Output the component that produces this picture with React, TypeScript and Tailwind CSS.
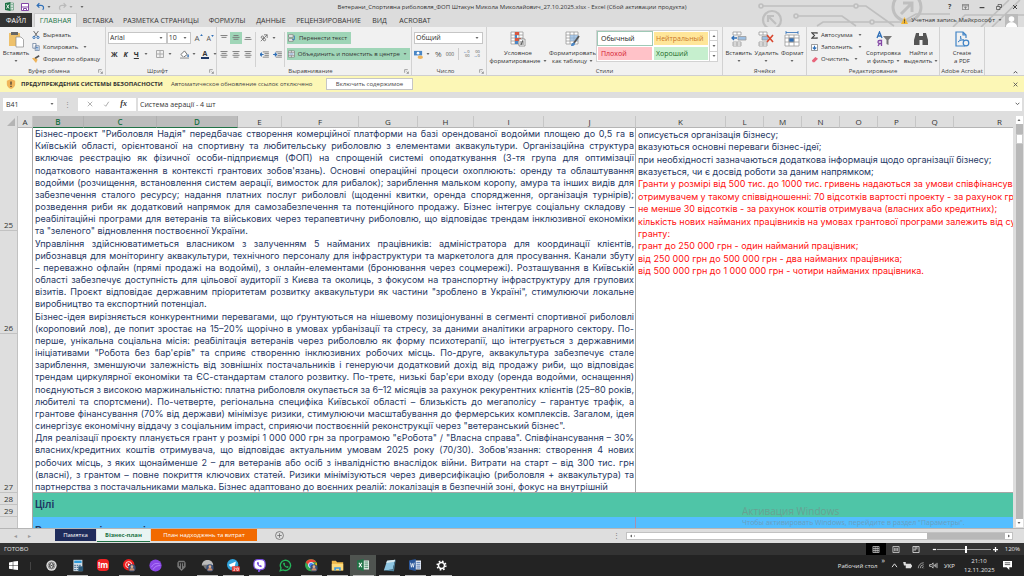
import { ReactNode } from "react";

const ui = "font-['Open_Sans','Noto_Sans',sans-serif]";

function Caret({ className = "" }: { className?: string }) {
  return (
    <svg viewBox="0 0 6 4" className={`h-[2px] w-[4px] shrink-0 ${className}`}>
      <path d="M0 0h6L3 4z" fill="#666" />
    </svg>
  );
}

function Launcher() {
  return (
    <svg viewBox="0 0 8 8" className="h-[5px] w-[5px]" fill="none" stroke="#888" strokeWidth="1.2">
      <path d="M1 6V1h5M4 4l3 3M7 4v3H4" />
    </svg>
  );
}

function Group({ label, className, launcher, children }: { label: string; className: string; launcher?: boolean; children: ReactNode }) {
  return (
    <section aria-label={label} className={`flex shrink-0 flex-col border-r border-[#d2d2d2] ${className}`}>
      <div className="flex h-10 min-w-0">{children}</div>
      <div className="flex h-2 items-center">
        <span className="flex-1 whitespace-nowrap text-center text-[6px] leading-[8px] text-[#444]">{label}</span>
        {launcher && (
          <button aria-label={`${label}: параметры`} className="pr-0.5">
            <Launcher />
          </button>
        )}
      </div>
    </section>
  );
}

function BigButton({ icon, lines, caret, className = "" }: { icon: ReactNode; lines: string[]; caret?: "below" | "inline"; className?: string }) {
  return (
    <button className={`flex flex-col items-center pt-1 ${className}`}>
      <span className="flex h-[18px] items-start">{icon}</span>
      {lines.map((l, i) => (
        <span key={l} className="flex items-center gap-0.5 whitespace-nowrap text-[6px] leading-[8px] text-[#333]">
          {l}
          {caret === "inline" && i === lines.length - 1 && <Caret />}
        </span>
      ))}
      {caret === "below" && <Caret className="mt-[3px]" />}
    </button>
  );
}

function SmallButton({ icon, label, caret }: { icon: ReactNode; label: string; caret?: boolean }) {
  return (
    <button className="flex h-3 items-center gap-[3px] whitespace-nowrap text-[6px] leading-[8px] text-[#333]">
      {icon}
      {label}
      {caret && <Caret className="ml-0.5" />}
    </button>
  );
}

function Combo({ label, value, className }: { label: string; value: string; className: string }) {
  return (
    <span className={`flex h-3 items-center border border-[#c6c6c6] bg-white ${className}`}>
      <select aria-label={label} defaultValue={value} className="min-w-0 flex-1 appearance-none bg-transparent pl-px text-[7px] leading-[10px] text-[#333] outline-none">
        <option>{value}</option>
      </select>
      <Caret className="mr-[3px]" />
    </span>
  );
}

function Lines({ widths, className = "" }: { widths: number[]; className?: string }) {
  return (
    <svg viewBox="0 0 8 8" className={`h-2 w-2 ${className}`} stroke="#777" strokeWidth="0.9">
      {widths.map((w, i) => (
        <path key={i} d={`M${4 - w / 2} ${1.5 + i * 1.9}h${w}`} />
      ))}
    </svg>
  );
}

function GridIcon({ accent, className = "h-4 w-4" }: { accent: ReactNode; className?: string }) {
  return (
    <svg viewBox="0 0 16 16" className={className} fill="none">
      <path d="M1 1h12v12H1zM1 4h12M1 7h12M1 10h12M5 1v12M9 1v12" fill="#fff" stroke="#999" strokeWidth="0.8" />
      {accent}
    </svg>
  );
}

function TitleBar() {
  return (
    <header className="relative flex h-[27px] flex-col overflow-hidden bg-[#dcdcdc]">
      <svg viewBox="0 0 270 27" className="absolute right-0 top-0 h-[27px] w-[270px]" fill="none" stroke="#bfbfbf" strokeWidth="1.6">
        <path d="M9 6h91M104 6h8l28 20M44 16h44l14 10M63 26l6-4h48M120 22h28l14-8h34M199 27l12-12h60M227 27l28-27M238 27l28-27" />
        <circle cx="7" cy="6" r="2" />
        <circle cx="102" cy="6" r="2" />
        <circle cx="42" cy="16" r="2" />
        <circle cx="118" cy="22" r="2" />
        <circle cx="18" cy="20" r="9" strokeWidth="2.2" />
        <path d="M22 24l-8-8M14 22v-6h6" strokeWidth="2.2" />
        <circle cx="153" cy="7" r="14" strokeWidth="3" />
        <path d="M147 14l11-11M149 3h9v9" strokeWidth="3" />
      </svg>
      <div className="relative flex h-[13px] items-center">
        <div className="flex w-[84px] items-center pl-[5px]">
          <svg viewBox="0 0 18 18" className="h-[9px] w-[9px]">
            <path d="M9 2h8v14H9z" fill="#fff" stroke="#217346" />
            <path d="M11 5h5M11 8h5M11 11h5M11 14h4" stroke="#217346" />
            <path d="M0 2l11-2v18L0 16z" fill="#217346" />
            <path d="M3 5l5 8M8 5l-5 8" stroke="#fff" strokeWidth="1.8" />
          </svg>
          <button aria-label="Сохранить" className="ml-[7px]">
            <svg viewBox="0 0 16 16" className="h-2 w-2">
              <path d="M1 1h14v14H1z" fill="#fff" stroke="#8346a6" strokeWidth="2" />
              <path d="M1 8h14M5 15v-4h6v4" fill="none" stroke="#8346a6" strokeWidth="2" />
            </svg>
          </button>
          <button aria-label="Отменить" className="ml-[7px] flex items-center gap-0.5">
            <svg viewBox="0 0 16 16" className="h-[9px] w-[9px]" fill="none" stroke="#2f6fb7" strokeWidth="2.2">
              <path d="M6 2L2 6l4 4M2 6h7c4 0 6 4 3 8" />
            </svg>
            <Caret />
          </button>
          <button aria-label="Повторить" className="ml-[7px] flex items-center gap-0.5 opacity-50">
            <svg viewBox="0 0 16 16" className="h-[9px] w-[9px]" fill="none" stroke="#999" strokeWidth="2.2">
              <path d="M10 2l4 4-4 4M14 6H7c-4 0-6 4-3 8" />
            </svg>
            <Caret />
          </button>
          <Caret className="ml-[7px]" />
        </div>
        <h1 className="flex-1 whitespace-nowrap pr-2 text-center text-[6px] leading-[8px] text-[#333]">
          Ветерани_Спортивна риболовля_ФОП Штакун Микола Миколайович_27.10.2025.xlsx - Excel (Сбой активации продукта)
        </h1>
        <div className="flex w-[76px] items-center justify-between pr-1.5 text-[7px] font-bold leading-none text-[#444]">
          <button aria-label="Справка">?</button>
          <button aria-label="Параметры ленты">
            <svg viewBox="0 0 12 10" className="h-[6px] w-[7px]" fill="none" stroke="#555"><path d="M.5.5h11v9H.5zM.5 3h11M6 9V5M4 6.500l2-2 2 2" /></svg>
          </button>
          <button aria-label="Свернуть">
            <svg viewBox="0 0 10 10" className="h-[6px] w-[6px]"><path d="M1 6h8" stroke="#444" strokeWidth="2" /></svg>
          </button>
          <button aria-label="Восстановить">
            <svg viewBox="0 0 12 12" className="h-[6px] w-[6px]" fill="none" stroke="#444" strokeWidth="1.4"><path d="M1 5h7v6H1zM4 5V1h7v6H8" /></svg>
          </button>
          <button aria-label="Закрыть">
            <svg viewBox="0 0 12 12" className="h-[6px] w-[6px]"><path d="M2 2l8 8M10 2l-8 8" stroke="#444" strokeWidth="2" /></svg>
          </button>
        </div>
      </div>
      <nav className="relative flex h-[14px] items-center text-[7px] leading-[9px] text-[#333]">
        <button className="h-full w-8 shrink-0 bg-[#333] text-white">ФАЙЛ</button>
        <button className="ml-0.5 h-full w-[43px] shrink-0 border-x border-t border-[#ccc] bg-[#f1f1f1] text-[#217346]">ГЛАВНАЯ</button>
        <button className="w-[42px] shrink-0">ВСТАВКА</button>
        <button className="w-[84px] shrink-0 whitespace-nowrap">РАЗМЕТКА СТРАНИЦЫ</button>
        <button className="w-12 shrink-0">ФОРМУЛЫ</button>
        <button className="w-10 shrink-0">ДАННЫЕ</button>
        <button className="w-[75px] shrink-0 whitespace-nowrap">РЕЦЕНЗИРОВАНИЕ</button>
        <button className="w-[27px] shrink-0">ВИД</button>
        <button className="w-11 shrink-0">ACROBAT</button>
        <div className="ml-auto flex items-center gap-[3px] pr-1.5">
          <svg viewBox="0 0 12 12" className="h-[7px] w-[7px]"><path d="M6 0l6 12H0z" fill="#f2b632" /><path d="M6 4v4M6 9v1.500" stroke="#333" strokeWidth="1.4" /></svg>
          <span className="whitespace-nowrap text-[6px]">Учетная запись Майкрософт</span>
          <Caret />
          <svg viewBox="0 0 14 14" className="h-[13px] w-[13px]"><path d="M0 0h14v14H0z" fill="#bbb" /><circle cx="7" cy="5.500" r="3" fill="#fff" /><path d="M1 14c0-7 12-7 12 0z" fill="#fff" /></svg>
        </div>
      </nav>
    </header>
  );
}

function Ribbon() {
  return (
    <div className="flex h-[49px] overflow-hidden border-b border-[#cfcfcf] bg-[#f1f1f1]">
      <Group label="Буфер обмена" className="w-[106px]" launcher>
        <BigButton
          className="w-8"
          caret="below"
          lines={["Вставить"]}
          icon={
            <svg viewBox="0 0 16 17" className="h-[17px] w-4">
              <path d="M1 2h11v13H1z" fill="#eec16c" />
              <path d="M3 1h7v3H3z" fill="#666" />
              <path d="M8 6h5l2.500 2.500V16H8z" fill="#fff" stroke="#888" strokeWidth=".7" />
            </svg>
          }
        />
        <div className="flex flex-col pt-0.5">
          <SmallButton label="Вырезать" icon={<svg viewBox="0 0 10 10" className="h-2 w-2" fill="none" strokeWidth="1.2"><path d="M2 0l5 7M8 0L3 7" stroke="#666" /><circle cx="2.500" cy="8" r="1.400" stroke="#2f6fb7" /><circle cx="7.500" cy="8" r="1.400" stroke="#2f6fb7" /></svg>} />
          <SmallButton caret label="Копировать" icon={<svg viewBox="0 0 10 10" className="h-2 w-2" fill="#fff" stroke="#6a7f9c"><path d="M1 .5h4v6H1zM4 3.500h5v6H4z" /><path d="M5 5.500h3M5 7.500h3" stroke="#2f6fb7" /></svg>} />
          <SmallButton label="Формат по образцу" icon={<svg viewBox="0 0 10 10" className="h-2 w-2"><path d="M0 4l4-1 3 3-2 4z" fill="#eeb45c" /><path d="M4 4l5-3" stroke="#555" strokeWidth="2" /></svg>} />
        </div>
      </Group>

      <Group label="Шрифт" className="w-[111px]" launcher>
        <div className="flex w-full flex-col gap-1 px-0.5 pt-[5px]">
          <div className="flex items-center">
            <Combo label="Шрифт" value="Arial" className="w-[59px]" />
            <Combo label="Размер шрифта" value="10" className="w-6" />
            <button aria-label="Увеличить размер" className="ml-1 flex items-start text-[8px] leading-none text-[#555]">
              A<svg viewBox="0 0 4 3" className="h-[2px] w-[3px]"><path d="M0 3h4L2 0z" fill="#2f6fb7" /></svg>
            </button>
            <button aria-label="Уменьшить размер" className="ml-1 flex items-start text-[7px] leading-none text-[#555]">
              A<svg viewBox="0 0 4 3" className="h-[2px] w-[3px]"><path d="M0 0h4L2 3z" fill="#2f6fb7" /></svg>
            </button>
          </div>
          <div className="flex h-3 items-center text-[7px] leading-none text-[#333]">
            <button className="ml-[3px] font-bold">Ж</button>
            <button className="ml-1.5 font-bold italic">К</button>
            <button className="ml-1.5 flex items-center gap-[5px] font-bold underline">Ч<Caret /></button>
            <span className="ml-1 h-3 w-px bg-[#ccc]" />
            <button aria-label="Границы" className="ml-1 flex items-center gap-1">
              <svg viewBox="0 0 8 8" className="h-2 w-2" fill="none" stroke="#aaa"><path d="M.5.5h7v7h-7zM4 0v8M0 4h8" /></svg>
              <Caret />
            </button>
            <span className="ml-1 h-3 w-px bg-[#ccc]" />
            <button aria-label="Цвет заливки" className="ml-1 flex items-center gap-[3px]">
              <svg viewBox="0 0 10 10" className="h-[9px] w-[9px]"><path d="M1 5l4-4 3 4-4 3z" fill="#fff" stroke="#666" /><path d="M9 5v3" stroke="#2f6fb7" strokeWidth="1.500" /><path d="M0 9h10" stroke="#bbb" strokeWidth="2" /></svg>
              <Caret />
            </button>
            <button aria-label="Цвет текста" className="ml-[5px] flex items-center gap-1">
              <span className="w-2 border-b-2 border-[#1f3864] text-center text-[7px] font-bold leading-[7px]">А</span>
              <Caret />
            </button>
          </div>
        </div>
      </Group>

      <Group label="Выравнивание" className="w-[195px]" launcher>
        <div className="flex w-full pt-[5px]">
          <div className="flex w-[38px] flex-col gap-1 pl-px">
            <div className="flex h-3 items-center">
              <button aria-label="По верхнему краю" className="flex h-3 w-3 items-center justify-center"><Lines widths={[7, 5]} /></button>
              <button aria-label="По середине" className="flex h-3 w-3 items-center justify-center bg-[#9fd5b7]"><Lines widths={[5, 7, 5]} /></button>
              <button aria-label="По нижнему краю" className="flex h-3 w-3 items-end justify-center"><Lines widths={[5, 7]} /></button>
            </div>
            <div className="flex h-3 items-center">
              <button aria-label="По левому краю" className="flex w-3 justify-center"><Lines widths={[7, 5, 7, 5]} /></button>
              <button aria-label="По центру" className="flex w-3 justify-center"><Lines widths={[7, 5, 7, 5]} /></button>
              <button aria-label="По правому краю" className="flex w-3 justify-center"><Lines widths={[7, 5, 7, 5]} /></button>
            </div>
          </div>
          <div className="flex w-[30px] flex-col gap-1 border-x border-[#d2d2d2] pl-1">
            <button aria-label="Ориентация" className="flex h-3 items-center gap-1">
              <svg viewBox="0 0 10 10" className="h-2 w-2" fill="none" stroke="#666"><path d="M1 9l8-8M5 1h4v4" /><circle cx="3" cy="4" r="1.500" /><circle cx="5.500" cy="7" r="1.500" /></svg>
              <Caret />
            </button>
            <div className="flex h-3 items-center gap-1">
              <button aria-label="Уменьшить отступ"><svg viewBox="0 0 10 8" className="h-[7px] w-[9px]" stroke="#777"><path d="M3 1h7M5 3h5M5 5h5M3 7h7" /><path d="M0 4h4M2 2L0 4l2 2" stroke="#2f6fb7" fill="none" strokeWidth="1.300" /></svg></button>
              <button aria-label="Увеличить отступ"><svg viewBox="0 0 10 8" className="h-[7px] w-[9px]" stroke="#777"><path d="M3 1h7M5 3h5M5 5h5M3 7h7" /><path d="M0 4h4M2 2l2 2-2 2" stroke="#2f6fb7" fill="none" strokeWidth="1.300" /></svg></button>
            </div>
          </div>
          <div className="flex flex-col items-start gap-1 pl-0.5">
            <button className="flex h-3 w-16 items-center gap-[3px] whitespace-nowrap bg-[#9fd5b7] px-px text-[6px] leading-[8px] text-[#333]">
              <svg viewBox="0 0 10 10" className="h-2 w-2" stroke="#777" fill="#fff"><path d="M.5 1h6v3h-6zM.5 6h6v3h-6z" /><path d="M8 2v5H5" stroke="#2f6fb7" fill="none" /></svg>
              Перенести текст
            </button>
            <button className="flex h-3 w-[123px] items-center gap-[3px] whitespace-nowrap bg-[#9fd5b7] px-px text-[6px] leading-[8px] text-[#333]">
              <svg viewBox="0 0 10 10" className="h-2 w-2" stroke="#777" fill="#fff"><path d="M.5.5h9v9h-9zM.5 3h9M.5 7h9M5 0v3M5 7v3" /><path d="M2 5h6" stroke="#2f6fb7" /></svg>
              Объединить и поместить в центре
              <Caret className="ml-auto mr-0.5" />
            </button>
          </div>
        </div>
      </Group>

      <Group label="Число" className="w-[75px]" launcher>
        <div className="flex w-full flex-col gap-1 px-0.5 pt-[5px]">
          <Combo label="Числовой формат" value="Общий" className="w-[69px]" />
          <div className="flex h-3 items-center text-[7px] leading-none text-[#555]">
            <button aria-label="Финансовый формат" className="flex items-center gap-[3px]">
              <svg viewBox="0 0 10 10" className="h-[9px] w-[9px]"><path d="M0 1h9v5H0z" fill="#4a86c5" /><circle cx="4.500" cy="3.500" r="1.500" fill="#fff" /><ellipse cx="7" cy="8" rx="3" ry="2" fill="#eeb45c" /></svg>
              <Caret />
            </button>
            <button className="ml-[5px] text-[8px]">%</button>
            <button className="ml-1 text-[5px]">000</button>
            <span className="ml-1 h-3 w-px bg-[#ccc]" />
            <button aria-label="Увеличить разрядность" className="ml-1 flex flex-col items-end text-[4px] leading-[4px]"><span><b className="text-[#2f6fb7]">←</b>0</span><span>00</span></button>
            <button aria-label="Уменьшить разрядность" className="ml-1 flex flex-col items-end text-[4px] leading-[4px]"><span>00</span><span><b className="text-[#2f6fb7]">→</b>0</span></button>
          </div>
        </div>
      </Group>

      <Group label="Стили" className="w-[236px]">
        <BigButton className="w-[62px]" caret="inline" lines={["Условное", "форматирование"]} icon={<GridIcon accent={<><path d="M5 1h4v3H5zM5 7h6v3H5z" fill="#d9573f" /><path d="M5 4h2v3H5zM5 10h3v3H5z" fill="#4a86c5" /><path d="M9 8h6v7H9z" fill="#fff" stroke="#777" strokeWidth=".7" /><path d="M10 11h4M10 13h4M13 9l-2 5" stroke="#333" strokeWidth=".7" /></>} />} />
        <BigButton className="w-[47px]" caret="inline" lines={["Форматировать", "как таблицу"]} icon={<GridIcon accent={<><path d="M5 4h8v6H5z" fill="#8ab4de" opacity=".7" /><path d="M14 5l-5 7" stroke="#555" strokeWidth="1.800" /><path d="M6 15c0-3 2-4 4-3 0 3-2 3-4 3z" fill="#4a86c5" /></>} />} />
        <div className="mt-[3px] flex h-8 w-[122px] border border-[#d2d2d2] bg-white">
          <div className="grid flex-1 grid-cols-2 gap-0.5 p-px text-[7px] leading-[9px]">
            <button className="bg-white px-[3px] text-left text-[#222] outline outline-[#9fc9b6]">Обычный</button>
            <button className="bg-[#ffe699] px-0.5 text-left text-[#c9762b]">Нейтральный</button>
            <button className="bg-[#ffc2c8] px-[3px] text-left text-[#d4202f]">Плохой</button>
            <button className="bg-[#c6efce] px-0.5 text-left text-[#1d6b28]">Хороший</button>
          </div>
          <div className="flex w-2 flex-col divide-y divide-[#d2d2d2] border-l border-[#d2d2d2]">
            <button aria-label="Предыдущие стили" className="flex flex-1 items-center justify-center"><Caret className="rotate-180" /></button>
            <button aria-label="Следующие стили" className="flex flex-1 items-center justify-center"><Caret /></button>
            <button aria-label="Все стили" className="flex flex-1 items-center justify-center"><Caret /></button>
          </div>
        </div>
      </Group>

      <Group label="Ячейки" className="w-[84px]">
        <BigButton className="w-8" caret="below" lines={["Вставить"]} icon={<svg viewBox="0 0 16 16" className="h-4 w-4" fill="#fff" stroke="#999" strokeWidth=".8"><path d="M2 1h8v3H2zM6 1v3M2 11h8v4H2zM6 11v4M2 13h8" /><path d="M7 5.500h8v3.500H7z" fill="#9dbfe2" /><path d="M6 7H1M3 5L1 7l2 2" stroke="#2f6fb7" strokeWidth="1.300" fill="none" /></svg>} />
        <BigButton className="w-6" caret="below" lines={["Удалить"]} icon={<svg viewBox="0 0 16 16" className="h-4 w-4" fill="#fff" stroke="#999" strokeWidth=".8"><path d="M1 1h8v3H1zM5 1v3M1 11h8v4H1zM5 11v4M1 13h8" /><path d="M4 5.500h6v3.500H4z" fill="#9dbfe2" /><path d="M9 4l6 7M15 4l-6 7" stroke="#d9472f" strokeWidth="1.600" /></svg>} />
        <BigButton className="w-7" caret="below" lines={["Формат"]} icon={<svg viewBox="0 0 16 16" className="h-4 w-4" fill="#fff" stroke="#999" strokeWidth=".8"><path d="M1 4h14v11H1zM1 7h14M1 11h14M5 4v11M10 4v11" /><path d="M5 7h5v4H5z" fill="#2f6fb7" /><path d="M2 1.500h12M2 0v3M14 0v3" stroke="#2f6fb7" /></svg>} />
      </Group>

      <Group label="Редактирование" className="w-[133px]">
        <div className="flex w-[56px] flex-col pl-1 pt-0.5">
          <SmallButton caret label="Автосумма" icon={<svg viewBox="0 0 8 8" className="h-[7px] w-[7px]" fill="none" stroke="#444" strokeWidth="1.300"><path d="M7 2V1H1l3 3-3 3h6V6" /></svg>} />
          <SmallButton caret label="Заполнить" icon={<svg viewBox="0 0 8 8" className="h-[7px] w-[7px]" fill="#fff" stroke="#888"><path d="M.5.5h7v7h-7z" /><path d="M4 2v4M2 4l2 2 2-2" stroke="#2f6fb7" strokeWidth="1.300" fill="none" /></svg>} />
          <SmallButton caret label="Очистить" icon={<svg viewBox="0 0 8 8" className="h-[7px] w-[7px]"><path d="M1 5l4-4 3 2-4 4H2z" fill="#e8657b" /></svg>} />
        </div>
        <BigButton className="w-[41px]" caret="inline" lines={["Сортировка", "и фильтр"]} icon={<svg viewBox="0 0 18 16" className="h-4 w-[18px]"><path d="M2 7l2.500-6L7 7M3 5h3" fill="none" stroke="#2f6fb7" strokeWidth="1.300" /><path d="M6.500 15V9.500H4.500a1.500 1.500 0 000 3h2M4.500 12.500L3 15" fill="none" stroke="#8346a6" strokeWidth="1.300" /><path d="M8 5h9l-3.500 4v5l-2-1V9z" fill="#777" /></svg>} />
        <BigButton className="w-[34px]" caret="inline" lines={["Найти и", "выделить"]} icon={<svg viewBox="0 0 16 16" className="h-4 w-4" fill="#555"><path d="M3 2h3v3h4V2h3l2 7v5H9.500V9h-3v5H1V9z" /></svg>} />
      </Group>

      <Group label="Adobe Acrobat" className="w-[45px]">
        <BigButton className="w-full" lines={["Create", "a PDF"]} icon={<svg viewBox="0 0 16 16" className="h-4 w-4" fill="none" stroke="#3f83c6" strokeWidth="1.200"><path d="M11 15H2V1h7l3 3v3M9 1v3h3" /><path d="M4 11c3-2 3-5 2.500-6C6 8 8 9 10 9c-2 0-4 0-6 2z" strokeWidth=".9" /><circle cx="12" cy="12" r="2.800" /></svg>} />
      </Group>
      <button aria-label="Свернуть ленту" className="mb-px ml-auto mr-1.5 self-end">
        <svg viewBox="0 0 8 6" className="h-1 w-[5px]" fill="none" stroke="#555" strokeWidth="1.600"><path d="M1 5l3-3 3 3" /></svg>
      </button>
    </div>
  );
}

function SecurityBar() {
  return (
    <div role="alert" className="flex h-4 items-center bg-[#fcf7b6] text-[6px] leading-[8px] text-[#444]">
      <svg viewBox="0 0 12 12" className="ml-1.5 h-[10px] w-[10px]"><path d="M6 0l5 2v4c0 3-2 5-5 6-3-1-5-3-5-6V2z" fill="#f0b65a" /><path d="M6 3v4M6 8v1.500" stroke="#333" strokeWidth="1.400" /></svg>
      <strong className="ml-[5px] w-[145px] whitespace-nowrap text-[#333]">ПРЕДУПРЕЖДЕНИЕ СИСТЕМЫ БЕЗОПАСНОСТИ</strong>
      <span className="ml-[5px] w-[144px] whitespace-nowrap">Автоматическое обновление ссылок отключено</span>
      <button className="ml-[11px] h-3 w-[87px] whitespace-nowrap border border-[#c6c6c6] bg-white">Включить содержимое</button>
      <button aria-label="Закрыть сообщение" className="ml-auto mr-1.5">
        <svg viewBox="0 0 8 8" className="h-[5px] w-[5px]" stroke="#555" strokeWidth="1.400"><path d="M1 1l6 6M7 1L1 7" /></svg>
      </button>
    </div>
  );
}

function FormulaBar() {
  return (
    <div className="flex h-6 items-center bg-[#dedede] pl-[3px] pr-0.5 text-[#333]">
      <div className="flex h-[13px] w-[54px] items-center bg-white">
        <input aria-label="Имя" defaultValue="B41" className="w-9 flex-1 pl-[3px] text-[7px] leading-[9px] outline-none" />
        <Caret className="mr-[3px]" />
      </div>
      <span className="mx-[7px] text-[7px] leading-none text-[#888]">⋮</span>
      <div className="flex h-[13px] w-[58px] items-center justify-around bg-white px-1">
        <button aria-label="Отмена"><svg viewBox="0 0 8 8" className="h-[6px] w-[6px]" stroke="#aaa" strokeWidth="1.200"><path d="M1 1l6 6M7 1L1 7" /></svg></button>
        <button aria-label="Ввод"><svg viewBox="0 0 8 8" className="h-[6px] w-[7px]" fill="none" stroke="#aaa" strokeWidth="1.300"><path d="M1 5l2 2 4-6" /></svg></button>
        <button aria-label="Вставить функцию" className="font-['Liberation_Serif',serif] text-[8px] font-bold italic leading-none">fx</button>
      </div>
      <div className="ml-0.5 flex h-[13px] flex-1 items-center bg-white">
        <input aria-label="Строка формул" defaultValue="Система аерації - 4 шт" className="flex-1 pl-0.5 text-[7px] leading-[9px] outline-none" />
        <svg viewBox="0 0 8 6" className="mr-0.5 h-1 w-[5px]" fill="none" stroke="#666" strokeWidth="1.600"><path d="M1 1l3 3 3-3" /></svg>
      </div>
    </div>
  );
}

const planLines: [string, boolean?][] = [
  ["Бізнес-проєкт \"Риболовля Надія\" передбачає створення комерційної платформи на базі орендованої водойми площею до 0,5 га в"],
  ["Київській області, орієнтованої на спортивну та любительську риболовлю з елементами аквакультури. Організаційна структура"],
  ["включає реєстрацію як фізичної особи-підприємця (ФОП) на спрощеній системі оподаткування (3-тя група для оптимізації"],
  ["податкового навантаження в контексті грантових зобов'язань). Основні операційні процеси охоплюють: оренду та облаштування"],
  ["водойми (розчищення, встановлення систем аерації, вимосток для рибалок); зариблення мальком коропу, амура та інших видів для"],
  ["забезпечення сталого ресурсу; надання платних послуг риболовлі (щоденні квитки, оренда спорядження, організація турнірів);"],
  ["розведення риби як додатковий напрямок для самозабезпечення та потенційного продажу. Бізнес інтегрує соціальну складову –"],
  ["реабілітаційні програми для ветеранів та військових через терапевтичну риболовлю, що відповідає трендам інклюзивної економіки"],
  ["та \"зеленого\" відновлення поствоєнної України.", true],
  ["Управління здійснюватиметься власником з залученням 5 найманих працівників: адміністратора для координації клієнтів,"],
  ["рибознавця для моніторингу аквакультури, технічного персоналу для інфраструктури та маркетолога для просування. Канали збуту"],
  ["– переважно офлайн (прямі продажі на водоймі), з онлайн-елементами (бронювання через соцмережі). Розташування в Київській"],
  ["області забезпечує доступність для цільової аудиторії з Києва та околиць, з фокусом на транспортну інфраструктуру для групових"],
  ["візитів. Проєкт відповідає державним пріоритетам розвитку аквакультури як частини \"зроблено в Україні\", стимулюючи локальне"],
  ["виробництво та експортний потенціал.", true],
  ["Бізнес-ідея вирізняється конкурентними перевагами, що ґрунтуються на нішевому позиціонуванні в сегменті спортивної риболовлі"],
  ["(короповий лов), де попит зростає на 15–20% щорічно в умовах урбанізації та стресу, за даними аналітики аграрного сектору. По-"],
  ["перше, унікальна соціальна місія: реабілітація ветеранів через риболовлю як форму психотерапії, що інтегрується з державними"],
  ["ініціативами \"Робота без бар'єрів\" та сприяє створенню інклюзивних робочих місць. По-друге, аквакультура забезпечує стале"],
  ["зариблення, зменшуючи залежність від зовнішніх постачальників і генеруючи додатковий дохід від продажу риби, що відповідає"],
  ["трендам циркулярної економіки та ЄС-стандартам сталого розвитку. По-третє, низькі бар'єри входу (оренда водойми, оснащення)"],
  ["поєднуються з високою маржинальністю: платна риболовля окупається за 6–12 місяців за рахунок рекурентних клієнтів (25–80 років,"],
  ["любителі та спортсмени). По-четверте, регіональна специфіка Київської області – близькість до мегаполісу – гарантує трафік, а"],
  ["грантове фінансування (70% від держави) мінімізує ризики, стимулюючи масштабування до фермерських комплексів. Загалом, ідея"],
  ["синергізує економічну віддачу з соціальним impact, сприяючи поствоєнній реконструкції через \"ветеранський бізнес\".", true],
  ["Для реалізації проєкту планується грант у розмірі 1 000 000 грн за програмою \"єРобота\" / \"Власна справа\". Співфінансування – 30%"],
  ["власних/кредитних коштів отримувача, що відповідає актуальним умовам 2025 року (70/30). Зобов'язання: створення 4 нових"],
  ["робочих місць, з яких щонайменше 2 – для ветеранів або осіб з інвалідністю внаслідок війни. Витрати на старт – від 300 тис. грн"],
  ["(власні), з грантом – повне покриття ключових статей. Ризики мінімізуються через диверсифікацію (риболовля + аквакультура) та"],
  ["партнерства з постачальниками малька. Бізнес адаптовано до воєнних реалій: локалізація в безпечній зоні, фокус на внутрішній", true],
];

const noteLines: [string, boolean?][] = [
  ["описується організація бізнесу;"],
  ["вказуються основні переваги бізнес-ідеї;"],
  ["при необхідності зазначаються додаткова інформація щодо організації бізнесу;"],
  ["вказується, чи є досвід роботи за даним напрямком;"],
  ["Гранти у розмірі від 500 тис. до 1000 тис. гривень надаються за умови співфінансування", true],
  ["отримувачем у такому співвідношенні: 70 відсотків вартості проекту - за рахунок гранту,", true],
  ["не менше 30 відсотків - за рахунок коштів отримувача (власних або кредитних);", true],
  ["кількість нових найманих працівників на умовах грантової програми залежить від суми", true],
  ["гранту:", true],
  ["грант до 250 000 грн - один найманий працівник;", true],
  ["від 250 000 грн до 500 000 грн - два найманих працівника;", true],
  ["від 500 000 грн до 1 000 000 грн - чотири найманих працівника.", true],
];

const columns: [string, string][] = [
  ["A", "w-[15px]"], ["B", "w-[51px]"], ["C", "w-[73px]"], ["D", "w-[81px]"], ["E", "w-[44px]"],
  ["F", "w-[77px]"], ["G", "w-[59px]"], ["H", "w-[56px]"], ["I", "w-[70px]"], ["J", "w-[92px]"],
  ["K", "w-[90px]"], ["L", "w-[38px]"], ["M", "w-[38px]"], ["N", "w-[38px]"], ["O", "w-[38px]"],
  ["P", "w-[38px]"], ["Q", "w-[38px]"], ["R", "w-auto"],
];

const rowHead = "border-b border-r border-[#c2c2c2] bg-[#dedede] p-0 align-bottom text-[8px] font-normal leading-[10px] text-[#333]";

function Sheet() {
  return (
    <div className="relative flex min-h-0 flex-1 bg-[#dedede]">
      <div className="h-[412px] min-w-0 flex-1 overflow-hidden">
        <table className="w-full table-fixed border-separate border-spacing-0">
          <colgroup>
            <col className="w-[18px]" />
            {columns.map(([n, w]) => <col key={n} className={w} />)}
          </colgroup>
          <thead>
            <tr className="h-3 text-[8px] leading-[11px]">
              <td className="border-r border-[#c2c2c2] p-0">
                <svg viewBox="0 0 10 10" className="ml-auto mr-0.5 h-2 w-2"><path d="M10 0v10H0z" fill="#b4b4b4" /></svg>
              </td>
              {columns.map(([n]) => (
                <th
                  key={n}
                  scope="col"
                  className={
                    "BCD".includes(n)
                      ? "border-b border-r border-b-[#217346] border-r-[#b0b0b0] bg-[#bcbcbc] p-0 font-semibold text-[#217346]"
                      : n === "R"
                        ? "border-b border-[#b5b5b5] p-0 pl-8 font-normal text-[#333]"
                        : "border-b border-r border-b-[#b5b5b5] border-r-[#c6c6c6] p-0 font-normal text-[#333]"
                  }
                >
                  {n}
                </th>
              ))}
            </tr>
          </thead>
          <tbody className="font-['Inter','Liberation_Sans',Arial,sans-serif] text-[#1f3864]">
            <tr className="h-[103px]">
              <th scope="row" className={`${ui} ${rowHead}`}>25</th>
              <td rowSpan={6} className="border-r border-[#a6a6a6] bg-white" />
              <td rowSpan={3} colSpan={9} className="border-b border-r border-[#a6a6a6] bg-white p-0">
                <div className="flex h-[364px] flex-col justify-between overflow-hidden pl-0.5 pr-px pt-px text-[9px] leading-[10px]">
                  {planLines.map(([text, ragged]) => (
                    <p key={text} className={ragged ? "whitespace-nowrap" : "whitespace-nowrap [text-align-last:justify]"}>{text}</p>
                  ))}
                </div>
              </td>
              <td rowSpan={3} colSpan={8} className="overflow-hidden border-b border-[#a6a6a6] bg-white p-0 align-top">
                <div className="flex h-[148px] flex-col justify-between pl-0.5 pt-0.5 text-[9px] leading-[10px]">
                  {noteLines.map(([text, red]) => (
                    <p key={text} className={red ? "whitespace-nowrap text-[#ff1010]" : "whitespace-nowrap"}>{text}</p>
                  ))}
                </div>
              </td>
            </tr>
            <tr className="h-[103px]"><th scope="row" className={`${ui} ${rowHead}`}>26</th></tr>
            <tr className="h-[159px]"><th scope="row" className={`${ui} ${rowHead}`}>27</th></tr>
            <tr className="h-3">
              <th scope="row" className={`${ui} ${rowHead}`}>28</th>
              <td rowSpan={2} colSpan={17} className="bg-[#4fc5a7] p-0 pl-0.5 align-middle font-['Liberation_Sans',Arial,sans-serif] text-[10px] font-bold leading-3">Цілі</td>
            </tr>
            <tr className="h-3"><th scope="row" className={`${ui} ${rowHead}`}>29</th></tr>
            <tr className="h-4">
              <th scope="row" aria-label="30" className={`${ui} ${rowHead}`} />
              <td colSpan={9} className="border-r border-[#a98fae] bg-[#54beff] p-0 pl-0.5 pt-2 align-top font-['Liberation_Sans',Arial,sans-serif] text-[10px] font-bold leading-[12px]">
                <div className="whitespace-nowrap">Результати діяльності</div>
              </td>
              <td colSpan={8} className="bg-[#54beff] p-0" />
            </tr>
          </tbody>
        </table>
      </div>
      <div className="flex w-[11px] flex-col items-center bg-[#dedede] pl-px">
        <button aria-label="Прокрутить вверх" className="flex h-2 w-[7px] items-center justify-center bg-white"><Caret className="rotate-180" /></button>
        <div className="flex w-[7px] flex-1 flex-col bg-[#b8b8b8]"><span className="mt-2.5 h-2.5 border border-[#ccc] bg-white" /></div>
        <button aria-label="Прокрутить вниз" className="mb-px flex h-2 w-[7px] items-center justify-center bg-white"><Caret /></button>
      </div>
      <div className="pointer-events-none absolute bottom-0 right-[30px] w-[252px] text-[#808080] opacity-50">
        <div className="text-[10px] leading-3">Активация Windows</div>
        <div className="whitespace-nowrap text-[7px] leading-[11px]">Чтобы активировать Windows, перейдите в раздел "Параметры".</div>
      </div>
    </div>
  );
}

function SheetTabs() {
  return (
    <div className="flex h-[15px] border-t border-[#b5b5b5] bg-[#dedede] pb-px text-[6px] leading-[8px]">
      <div className="flex w-[55px] items-center gap-[11px] pl-3.5 text-[6px] text-[#999]">
        <button aria-label="Предыдущий лист">◂</button>
        <button aria-label="Следующий лист">▸</button>
      </div>
      <button className="mb-px h-3 w-[41px] bg-[#1f2c5c] text-white">Памятка</button>
      <button className="ml-px h-[13px] w-[53px] whitespace-nowrap border-b border-[#217346] bg-[#e9f4f2] font-bold text-[#217346]">Бізнес-план</button>
      <button className="ml-px h-3 w-[106px] whitespace-nowrap bg-[#f26a00] text-white">План надходжень та витрат</button>
      <button aria-label="Новый лист" className="ml-[18px]">
        <svg viewBox="0 0 12 12" className="h-[9px] w-[9px]" fill="none" stroke="#666"><circle cx="6" cy="6" r="5.300" /><path d="M6 3v6M3 6h6" /></svg>
      </button>
      <div className="ml-auto flex w-[411px] items-center">
        <span className="mr-[7px] w-1.5 text-[7px] leading-none text-[#777]">⋮</span>
        <div className="flex h-2 flex-1 items-center border border-[#c2c2c2] bg-white">
          <button aria-label="Прокрутить влево" className="flex w-2 justify-center border-r border-[#bbb]"><Caret className="rotate-90" /></button>
          <span className="flex-1" />
          <span className="h-full w-[78px] bg-[#b8b8b8]" />
          <button aria-label="Прокрутить вправо" className="flex w-[7px] justify-center"><Caret className="-rotate-90" /></button>
        </div>
        <span className="w-[11px]" />
      </div>
    </div>
  );
}

function StatusBar() {
  return (
    <div className="flex h-3 items-center bg-[#333] pl-1 pr-1 text-[6px] leading-[8px] text-[#e6e6e6]">
      <span>ГОТОВО</span>
      <div className="ml-auto flex h-full items-center">
        <button aria-label="Обычный" className="flex h-full w-5 items-center justify-center bg-black">
          <svg viewBox="0 0 8 8" className="h-[7px] w-2" fill="none" stroke="#ddd" strokeWidth=".8"><path d="M.5.5h7v7h-7zM.5 3h7M.5 5.300h7M3 .5v7M5.300.5v7" /></svg>
        </button>
        <button aria-label="Разметка страницы" className="flex w-5 justify-center">
          <svg viewBox="0 0 8 8" className="h-[7px] w-2" fill="none" stroke="#ccc"><path d="M.5.5h7v7h-7zM2.500 2v4M4 2v4M5.500 2v4" /></svg>
        </button>
        <button aria-label="Страничный режим" className="flex w-5 justify-center">
          <svg viewBox="0 0 8 8" className="h-[7px] w-2" fill="none" stroke="#ddd"><path d="M.5.5h7v7h-7zM3 1v3M5 1v3M1 4.500h3" /></svg>
        </button>
        <button aria-label="Уменьшить масштаб" className="ml-1.5 w-[5px]">
          <svg viewBox="0 0 6 6" className="h-[5px] w-[5px]" stroke="#fff"><path d="M1 3h4" strokeWidth="1.500" /></svg>
        </button>
        <label className="flex w-[54px] items-center">
          <input type="range" aria-label="Масштаб" min={0} max={100} defaultValue={54} className="h-2 w-full appearance-none bg-[linear-gradient(#aaa,#aaa)] bg-[length:100%_1px] bg-center bg-no-repeat [&::-webkit-slider-thumb]:h-[7px] [&::-webkit-slider-thumb]:w-[2px] [&::-webkit-slider-thumb]:appearance-none [&::-webkit-slider-thumb]:bg-white" />
        </label>
        <button aria-label="Увеличить масштаб" className="ml-0.5 w-[5px]">
          <svg viewBox="0 0 6 6" className="h-[5px] w-[5px]" stroke="#fff"><path d="M0 3h6M3 0v6" strokeWidth="1.500" /></svg>
        </button>
        <span className="ml-[7px]">120%</span>
      </div>
    </div>
  );
}

function TaskItem({ label, open, active, children }: { label: string; open?: boolean; active?: boolean; children: ReactNode }) {
  return (
    <button aria-label={label} className={`flex h-full w-[26px] shrink-0 flex-col items-center ${active ? "bg-[#4f5450]" : ""}`}>
      <span className="flex flex-1 items-center">{children}</span>
      <span className={`h-px w-[21px] ${open ? "bg-[#bbb]" : ""}`} />
    </button>
  );
}

const ic = "h-[13px] w-[13px]";

function Badge() {
  return (
    <>
      <circle cx="11" cy="11" r="4.500" fill="#38507a" />
      <path d="M8 14c0-4 6-4 6 0z" fill="#c98d6d" />
      <circle cx="11" cy="9.500" r="1.700" fill="#dfb08e" />
    </>
  );
}

function Taskbar() {
  return (
    <footer className="flex h-[21px] items-center bg-[#232323] text-[6px] leading-[8px] text-[#e6e6e6]">
      <TaskItem label="Пуск">
        <svg viewBox="0 0 12 12" className="h-[9px] w-[9px]" fill="#fff"><path d="M0 2l5-1v4.700H0zM5.700.8L12 0v5.700H5.700zM0 6.400h5V11L0 10.200zM5.700 6.400H12V12l-6.300-.8z" /></svg>
      </TaskItem>
      <span className="ml-1 h-2 w-px bg-[#444]" />
      <div className="ml-[7px] flex h-full">
        <TaskItem label="Copilot"><svg viewBox="0 0 16 16" className="h-[11px] w-[11px]" fill="none"><circle cx="8" cy="8" r="7.500" fill="#ddd" /><circle cx="8" cy="8" r="5" stroke="#666" /><path d="M5 6l3-2 3 2v4l-3 2-3-2zM5 6l6 4M11 6l-6 4" stroke="#444" strokeWidth="1.200" /></svg></TaskItem>
        <TaskItem label="Калькулятор" open><svg viewBox="0 0 16 16" className={ic}><path d="M3 1h11v14H3z" fill="#d6e2ea" /><path d="M4 2h9v3H4z" fill="#2f9ad8" /><path d="M5 7v7M8 7v7M11 7v7" stroke="#53789a" strokeWidth="2" strokeDasharray="1.600 1" /><path d="M9 9h6v6H9z" fill="#2c5876" /></svg></TaskItem>
        <TaskItem label="iM"><span className="flex h-[12px] w-[12px] items-center justify-center rounded-sm bg-[#f02224] text-[8px] font-bold leading-none text-white">!m</span></TaskItem>
        <TaskItem label="YouTube Music" open><svg viewBox="0 0 16 16" className={ic}><circle cx="7" cy="7" r="7" fill="#ee1c1c" /><circle cx="7" cy="7" r="3.800" fill="none" stroke="#fff" /><path d="M6 5l3 2-3 2z" fill="#fff" /><Badge /></svg></TaskItem>
        <TaskItem label="Браузер"><svg viewBox="0 0 16 16" className={ic}><circle cx="8" cy="8" r="7.500" fill="#8a47e6" /><path d="M3 10c3-5 6-5 10-4M5 13c2-4 5-5 9-5" stroke="#b98bff" fill="none" /></svg></TaskItem>
        <TaskItem label="World of Tanks"><svg viewBox="0 0 16 16" className="h-[11px] w-[11px]"><path d="M4 1h8l2 3v6l-6 6-6-6V4z" fill="#777" /><path d="M4 4h8M8 4v9M5 4v5M11 4v5" stroke="#222" strokeWidth="1.300" /></svg></TaskItem>
        <TaskItem label="Приложение" open><svg viewBox="0 0 16 16" className={ic}><path d="M1 8c0-9 14-9 14 0z" fill="#bbb" /><path d="M2 7h8v5H5z" fill="#777" /><Badge /></svg></TaskItem>
        <TaskItem label="Telegram" open><svg viewBox="0 0 16 16" className={ic}><circle cx="7" cy="7" r="7" fill="#2fa3dc" /><path d="M2 7l9-4-2 8-3-2-1 1z" fill="#fff" /><rect x="6" y="9" width="10" height="6.500" rx="1.500" fill="#e53b35" /><path d="M8 11h2v1l-2 2h2M12 11h2v3h-2z" stroke="#fff" strokeWidth=".8" fill="none" /></svg></TaskItem>
        <TaskItem label="Viber" open><svg viewBox="0 0 16 16" className={ic}><path d="M8 .5c6 0 7 1.500 7 6.500s-2 6-6 6l-2 3v-3C3 12.500 1 11.500 1 7S2 .5 8 .5z" fill="#fff" stroke="#7a4fe0" strokeWidth="1.500" /><path d="M5 4c-1 2 2 6 5 6l1-1.500-2-1-1 .5-1-1.500.500-1L6.500 3.500z" fill="#7a4fe0" /></svg></TaskItem>
        <TaskItem label="WhatsApp"><svg viewBox="0 0 16 16" className={ic} fill="none"><path d="M1.500 14.500l1-3.500a6.300 6.300 0 112.500 2.400z" stroke="#25b35a" strokeWidth="1.700" /><path d="M5 5c0 3 3 6 6 6l1-1.500-2-1-1 .8L7 7.500l.5-1L7 4.500H6z" fill="#25b35a" /></svg></TaskItem>
        <TaskItem label="Chrome" open><svg viewBox="0 0 16 16" className={ic}><circle cx="7.500" cy="7.500" r="7.500" fill="#34a853" /><path d="M1 4a7.500 7.500 0 0113 0H7.500L5 9z" fill="#ea4335" /><path d="M14 4a7.500 7.500 0 01-6.500 11L11 8z" fill="#fbbc05" /><circle cx="7.500" cy="7.500" r="3.300" fill="#4285f4" stroke="#fff" /><Badge /></svg></TaskItem>
        <TaskItem label="Проводник" open><svg viewBox="0 0 16 16" className={ic}><path d="M1 2h5l1.500 2H15v10H1z" fill="#f0b94a" /><path d="M1 6h14v8H1z" fill="#ffdc7c" /><path d="M4 10h8v4h-2v-2H6v2H4z" fill="#3f9be0" /></svg></TaskItem>
        <TaskItem label="Excel" open active><svg viewBox="0 0 16 16" className="h-3 w-3"><path d="M8 2h8v12H8z" fill="#e8f2ec" /><path d="M10 4h5M10 6.500h5M10 9h5M10 11.500h5" stroke="#217346" /><path d="M0 2l9-2v16l-9-2z" fill="#217346" /><path d="M2.500 5l4 6M6.500 5l-4 6" stroke="#fff" strokeWidth="1.400" /></svg></TaskItem>
        <TaskItem label="Блокнот" open><svg viewBox="0 0 16 16" className={ic}><path d="M5 2l10-1-3 12-11 1z" fill="#8ec6e2" /><path d="M5 2l10-1-.5 2.500L4 5z" fill="#d8e8ee" /><path d="M1 14l11-1 3-12 .5 1-2 13z" fill="#4d819c" /></svg></TaskItem>
        <TaskItem label="Word" open><svg viewBox="0 0 16 16" className="h-3 w-3"><path d="M8 2h8v12H8z" fill="#e8eef8" /><path d="M10 4.500h5M10 7h5M10 9.500h5M10 12h5" stroke="#2b579a" /><path d="M0 2l9-2v16l-9-2z" fill="#2b579a" /><path d="M2 5l1.200 6L4.500 6l1.300 5L7 5" stroke="#fff" fill="none" /></svg></TaskItem>
        <TaskItem label="Параметры" open><svg viewBox="0 0 16 16" className="h-[11px] w-[11px]" fill="none" stroke="#fff"><circle cx="8" cy="8" r="4.300" strokeWidth="2" /><circle cx="8" cy="8" r="6.300" strokeWidth="2.200" strokeDasharray="2.400 2.548" /></svg></TaskItem>
      </div>
      <div className="ml-auto flex items-center whitespace-nowrap pr-3">
        <span>Рабочий стол</span>
        <span className="ml-1 self-start text-[7px] leading-[8px]">»</span>
        <button aria-label="Скрытые значки" className="ml-1.5"><svg viewBox="0 0 8 6" className="h-[5px] w-[7px]" fill="none" stroke="#ddd" strokeWidth="1.200"><path d="M1 5l3-4 3 4" /></svg></button>
        <svg viewBox="0 0 10 8" className="ml-[5px] h-[7px] w-[9px]" fill="#ddd"><path d="M0 0h3v2h6v1h1v3H9v1H3V4H1z" /></svg>
        <svg viewBox="0 0 9 9" className="ml-[5px] h-[7px] w-[8px]" fill="none" stroke="#bbb"><path d="M1 8a7 7 0 017-7M3.500 8A4.500 4.500 0 018 3.500M6 8a2 2 0 012-2M8 8h.5" /></svg>
        <svg viewBox="0 0 10 8" className="ml-1 h-[7px] w-[9px]" fill="none" stroke="#ddd" strokeWidth=".9"><path d="M.5 3h2l2-2v6l-2-2h-2zM6 3v2M7.500 2v4M9 1v6" /></svg>
        <span className="ml-[6px] w-3">УКР</span>
        <div className="ml-2 w-[30px] text-center leading-[9px]"><div>21:10</div><div>12.11.2025</div></div>
        <svg viewBox="0 0 10 10" className="ml-[9px] h-[9px] w-[9px]"><path d="M0 0h10v7H7v3L4 7H0z" fill="#fff" /><path d="M2 2h6M2 4h6" stroke="#555" /></svg>
      </div>
    </footer>
  );
}

export default function App() {
  return (
    <main className={`flex min-h-screen w-full flex-col overflow-hidden bg-[#dedede] ${ui}`}>
      <TitleBar />
      <Ribbon />
      <SecurityBar />
      <FormulaBar />
      <Sheet />
      <SheetTabs />
      <StatusBar />
      <Taskbar />
    </main>
  );
}
